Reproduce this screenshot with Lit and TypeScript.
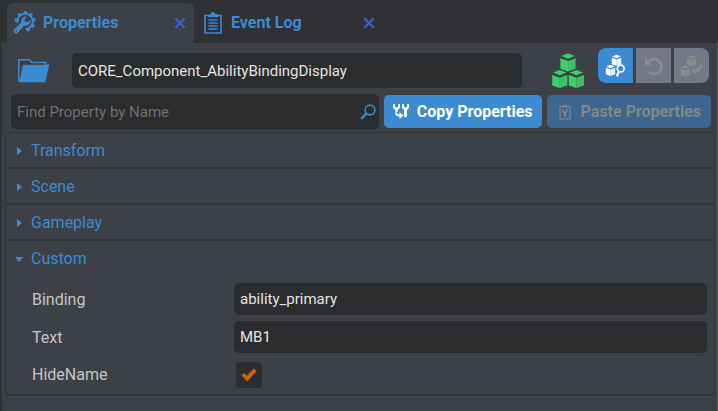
import { LitElement, html, css, svg } from "lit";
import { customElement, property } from "lit/decorators.js";

/* One isometric cube: a lid and two side faces, centred on (x, y). */
const cube = (x: number, y: number, r: number) => {
  const h = r * 0.36;
  const top = y - r * 1.2;
  const body = top + h + r * 0.3;
  return svg`
    <path d="M${x} ${top} L${x + r * 0.88} ${top + h} L${x} ${top + 2 * h} L${x - r * 0.88} ${top + h}Z"/>
    <path d="M${x - r} ${body} L${x} ${body + h} V${y + r * 1.2} L${x - r} ${y + r * 1.2 - h}Z"/>
    <path opacity="0.88" d="M${x + r} ${body} L${x} ${body + h} V${y + r * 1.2} L${x + r} ${y + r * 1.2 - h}Z"/>`;
};

const teeth = [0, 40, 80, 120, 160, 280, 320];

const icons = {
  wrenchGear: html`<svg width="23" height="24" viewBox="0 0 23 24" aria-hidden="true">
    <g fill="none" stroke="currentColor">
      <path stroke-width="2" d="M4.600 12A7.700 7.700 0 1 1 12.500 18.100"/>
      ${teeth.map((a) => svg`
        <path stroke-width="3.200" d="M12.200 3V0.100" transform="rotate(${a} 12.200 10.500)"/>`)}
    </g>
    <path fill="currentColor" d="M17.200 8.700 14.600 11.200 12.100 10.700 11.600 8.300 14.200 5.700A4.700 4.700 0 0 0 8.400 11.700L1 18.400A2.600 2.600 0 0 0 4.600 22L11.300 14.500A4.700 4.700 0 0 0 17.200 8.700Z"/>
    <circle cx="3.200" cy="19.900" r="0.800" fill="#3d4147"/>
  </svg>`,
  clipboard: html`<svg width="18" height="22" viewBox="0 0 18 22" aria-hidden="true">
    <path fill="none" stroke="currentColor" stroke-width="1.600" d="M1 3.500H17V21H1Z"/>
    <path fill="currentColor" d="M4 5.200V2.500H6.500A2.500 2.500 0 0 1 11.500 2.500H14V5.200Z"/>
    <path stroke="currentColor" stroke-width="1.500" d="M4.500 8H13.500M4.500 11H13.500M4.500 14H13.500M4.500 17H13.500"/>
  </svg>`,
  close: html`<svg width="12" height="12" viewBox="0 0 12 12" aria-hidden="true">
    <path stroke="currentColor" stroke-width="2.200" d="M1.300 1.300 10.700 10.700M10.700 1.300 1.300 10.700"/>
  </svg>`,
  folder: html`<svg width="32" height="24" viewBox="0 0 32 24" aria-hidden="true">
    <path fill="none" stroke="currentColor" stroke-width="1.500" d="M0.800 22.500V0.800H11.500L13.500 3.500H27.500V6"/>
    <path fill="currentColor" d="M4.800 5.600H31.300L27.300 23.300H1Z"/>
    <path fill="none" stroke="#3d4147" stroke-width="1" d="M1.900 18 4.300 5.200H27"/>
  </svg>`,
  search: html`<svg width="16" height="16" viewBox="0 0 16 16" aria-hidden="true">
    <circle cx="10" cy="6" r="4.900" fill="none" stroke="currentColor" stroke-width="1.600"/>
    <path stroke="currentColor" stroke-width="2.400" stroke-linecap="round" d="M6 10 1.800 14.200"/>
  </svg>`,
  cubes: html`<svg width="32" height="36" viewBox="0 0 32 36" aria-hidden="true">
    <g fill="currentColor">${cube(16, 9.400, 7.600)}${cube(7.800, 26, 7.600)}${cube(24.400, 26, 7.600)}</g>
  </svg>`,
  cubesSearch: html`<svg width="22" height="24" viewBox="0 0 22 24" aria-hidden="true">
    <g fill="currentColor">${cube(11.500, 6.400, 4.700)}${cube(5.500, 16.400, 4.700)}</g>
    <circle cx="15.700" cy="14.500" r="3.400" fill="#3b8bd2" stroke="currentColor" stroke-width="1.700"/>
    <path stroke="currentColor" stroke-width="2.200" stroke-linecap="round" d="M13.700 18 12.200 21.500"/>
  </svg>`,
  undo: html`<svg width="20" height="20" viewBox="0 0 20 20" aria-hidden="true">
    <path fill="none" stroke="currentColor" stroke-width="2.800" d="M4 6A7.500 7.500 0 1 1 5 16"/>
    <path fill="currentColor" d="M1 1.500V9.500H9Z"/>
  </svg>`,
  cubesCheck: html`<svg width="24" height="22" viewBox="0 0 24 22" aria-hidden="true">
    <g fill="currentColor">${cube(11.500, 5.800, 4.700)}${cube(5.500, 16, 4.700)}</g>
    <path fill="none" stroke="currentColor" stroke-width="2.800" d="M12.500 14 15.500 17.200 22 10.500"/>
  </svg>`,
  copy: html`<svg width="16" height="16" viewBox="0 0 16 16" aria-hidden="true">
    <path fill="currentColor" d="M0 0H1.800V2.600L3.500 3.800 5.200 2.600V0H7V3.800L4.700 6V8H2.300V6L0 3.800Z"/>
    <path fill="currentColor" d="M9 0H10.800V2.600L12.500 3.800 14.200 2.600V0H16V3.800L14 6V12A1.500 1.500 0 0 1 11 12V6L9 3.800Z"/>
    <path fill="none" stroke="currentColor" stroke-width="2" d="M3 8.500C3 10.500 4 11.500 7 11.500"/>
    <path fill="currentColor" d="M6.500 8 10.500 11.500 6.500 15.200Z"/>
  </svg>`,
  paste: html`<svg width="12" height="16" viewBox="0 0 12 16" aria-hidden="true">
    <path fill="none" stroke="currentColor" stroke-width="1.200" d="M1 2.500H11V15H1Z"/>
    <path fill="currentColor" d="M3.500 3.500V1.500H4.700A1.400 1.400 0 0 1 7.300 1.500H8.500V3.500Z"/>
    <path fill="currentColor" d="M3.200 5H4.500V6.800L6 7.800 7.500 6.800V5H8.800V7.600L7 9.300V13H5V9.300L3.200 7.600Z"/>
  </svg>`,
};

@customElement("panel-section")
export class PanelSection extends LitElement {
  @property() label = "";
  @property({ type: Boolean }) expanded = false;

  static styles = css`
    :host {
      display: block;
      border-bottom: 2px solid #323438;
    }
    .title {
      display: flex;
      align-items: center;
      gap: 8px;
      height: 34px;
      padding: 2px 0 0 9px;
      box-sizing: border-box;
      color: #3b8bd2;
      cursor: pointer;
      list-style: none;
    }
    .arrow {
      width: 8px;
      height: 8px;
      fill: currentColor;
    }
    .section[open] .arrow {
      transform: rotate(90deg);
    }
  `;

  render() {
    return html`<details class="section" ?open=${this.expanded}>
      <summary class="title">
        <svg class="arrow" viewBox="0 0 8 8" aria-hidden="true"><path d="M2 0 7 4 2 8Z"/></svg>
        ${this.label}
      </summary>
      <slot></slot>
    </details>`;
  }
}

@customElement("app-root")
export class AppRoot extends LitElement {
  static styles = css`
    :host {
      display: block;
      box-sizing: border-box;
      min-height: 100vh;
      background: #303135;
      color: #c3c5c8;
      font: 16px/20px Roboto, "Liberation Sans", sans-serif;
    }
    svg {
      display: block;
      flex: none;
    }
    button,
    input {
      box-sizing: border-box;
      margin: 0;
      border: 0;
      font: inherit;
    }
    button {
      display: flex;
      align-items: center;
      justify-content: center;
      padding: 0;
      background: none;
      color: inherit;
    }
    .tabs {
      display: flex;
      height: 43px;
      padding: 3px 7px 0;
      box-sizing: border-box;
    }
    .tab {
      display: flex;
      align-items: center;
      justify-content: space-between;
      width: 187px;
      padding: 0 8px 0 6px;
      border-radius: 6px 6px 0 0;
      box-sizing: border-box;
      color: #3b8bd2;
    }
    .tab.current {
      background: #3d4147;
    }
    .tab.other {
      padding: 0 6px 0 10px;
    }
    .tab-name {
      gap: 7px;
      font-weight: 700;
    }
    .tab.other .tab-name {
      gap: 9px;
    }
    .close {
      color: #3a63c8;
    }
    .panel {
      min-height: calc(100vh - 43px);
      box-sizing: border-box;
      margin-left: 2px;
      padding: 5px 2px 16px 3px;
      border-right: 1px solid #54565c;
      background: #3d4147;
    }
    .head {
      display: flex;
      align-items: center;
      padding: 0 6px 0 13px;
    }
    .folder {
      color: #3b8bd2;
    }
    .field {
      min-width: 0;
      height: 32px;
      padding: 0 6px;
      border-radius: 5px;
      background: #2b2c2e;
      color: #e4e4e4;
      font-size: 15px;
    }
    .name {
      flex: 1;
      height: 35px;
      margin: 5px 30px 6px 22px;
    }
    .cubes {
      margin: 5px 14px 5px 0;
      color: #3dd068;
    }
    .actions {
      display: flex;
      gap: 3px;
      align-self: flex-start;
      border-radius: 8px;
      overflow: hidden;
    }
    .action {
      width: 35px;
      height: 35px;
      background: #737986;
      color: #8c8c8c;
    }
    .action.on {
      background: #3b8bd2;
      color: #fff;
    }
    .tools {
      display: flex;
      align-items: center;
      gap: 5px;
      padding: 0 4px 0 6px;
    }
    .find {
      display: flex;
      flex: 1;
      align-items: center;
      min-width: 0;
      height: 35px;
      padding-right: 3px;
      box-sizing: border-box;
      border-radius: 5px;
      background: #2b2c2e;
      color: #3b8bd2;
    }
    .find-box {
      flex: 1;
    }
    .find-box::placeholder {
      color: #6e7073;
      opacity: 1;
    }
    .command {
      gap: 8px;
      height: 33px;
      padding: 0 9px;
      border-radius: 5px;
      background: #3b8bd2;
      color: #fff;
      font-weight: 700;
    }
    .command:disabled {
      gap: 10px;
      padding: 0 10px 0 12px;
      background: #3c668f;
      color: #83868a;
    }
    .sections {
      margin-top: 3px;
      border: 1px solid #323438;
      border-bottom: 0;
    }
    .rows {
      display: grid;
      grid-template-columns: 202px 1fr;
      align-items: center;
      row-gap: 6px;
      padding: 8px 7px 6px 26px;
    }
    .rows label {
      padding-top: 2px;
    }
    .check {
      appearance: none;
      display: grid;
      place-items: center;
      width: 26px;
      height: 26px;
      margin: 3px 2px 0;
      border-radius: 4px;
      background: #2d2e31;
    }
    .check:checked::before {
      content: "";
      width: 15px;
      height: 13px;
      background: #c8640f;
      clip-path: polygon(0 52%, 17% 34%, 36% 56%, 82% 0, 100% 20%, 38% 100%);
    }
  `;

  render() {
    return html`
      <div class="tabs" role="tablist">
        <div class="tab current">
          <button class="tab-name" role="tab" aria-selected="true">${icons.wrenchGear}Properties</button>
          <button class="close" aria-label="Close Properties">${icons.close}</button>
        </div>
        <div class="tab other">
          <button class="tab-name" role="tab" aria-selected="false">${icons.clipboard}Event Log</button>
          <button class="close" aria-label="Close Event Log">${icons.close}</button>
        </div>
      </div>
      <main class="panel">
        <div class="head">
          <span class="folder">${icons.folder}</span>
          <input class="field name" aria-label="Name" value="CORE_Component_AbilityBindingDisplay" />
          <span class="cubes">${icons.cubes}</span>
          <div class="actions">
            <button class="action on" aria-label="Find template">${icons.cubesSearch}</button>
            <button class="action" aria-label="Revert" disabled>${icons.undo}</button>
            <button class="action" aria-label="Update template" disabled>${icons.cubesCheck}</button>
          </div>
        </div>
        <div class="tools">
          <div class="find">
            <input class="field find-box" aria-label="Find Property by Name" placeholder="Find Property by Name" />
            ${icons.search}
          </div>
          <button class="command">${icons.copy}Copy Properties</button>
          <button class="command" disabled>${icons.paste}Paste Properties</button>
        </div>
        <div class="sections">
          <panel-section label="Transform"></panel-section>
          <panel-section label="Scene"></panel-section>
          <panel-section label="Gameplay"></panel-section>
          <panel-section label="Custom" expanded>
            <div class="rows">
              <label for="binding">Binding</label>
              <input class="field" id="binding" value="ability_primary" />
              <label for="text">Text</label>
              <input class="field" id="text" value="MB1" />
              <label for="hide-name">HideName</label>
              <input class="check" id="hide-name" type="checkbox" checked />
            </div>
          </panel-section>
        </div>
      </main>
    `;
  }
}
